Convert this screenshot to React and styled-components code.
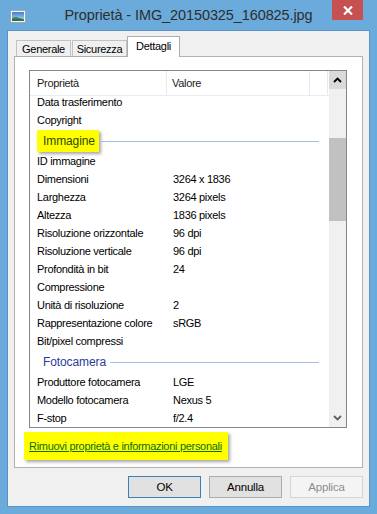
import React from "react";
import styled, { createGlobalStyle } from "styled-components";

const GlobalStyle = createGlobalStyle`
    html, body {
        margin: 0;
        padding: 0;
        background: #6aabdc;
    }
    body {
        font-family: "Liberation Sans", Arial, sans-serif;
        font-size: 11px;
        letter-spacing: -0.3px;
        color: #000;
    }
`

const tabs = [
    { title: "Generale", width: 55, active: false },
    { title: "Sicurezza", width: 55, active: false },
    { title: "Dettagli", width: 53, active: true },
]

const rows = [
    { name: "Data trasferimento" },
    { name: "Copyright" },
    { group: "Immagine", highlight: true },
    { name: "ID immagine" },
    { name: "Dimensioni", value: "3264 x 1836" },
    { name: "Larghezza", value: "3264 pixels" },
    { name: "Altezza", value: "1836 pixels" },
    { name: "Risoluzione orizzontale", value: "96 dpi" },
    { name: "Risoluzione verticale", value: "96 dpi" },
    { name: "Profondità in bit", value: "24" },
    { name: "Compressione" },
    { name: "Unità di risoluzione", value: "2" },
    { name: "Rappresentazione colore", value: "sRGB" },
    { name: "Bit/pixel compressi" },
    { group: "Fotocamera" },
    { name: "Produttore fotocamera", value: "LGE" },
    { name: "Modello fotocamera", value: "Nexus 5" },
    { name: "F-stop", value: "f/2.4" },
    { name: "Tempo di esposizione", value: "1/30 sec." },
]

const ImageIcon = () => (
    <svg width="16" height="13" viewBox="0 0 16 13">
        <defs>
            <linearGradient id="sky" x1="0" y1="0" x2="0" y2="1">
                <stop offset="0" stopColor="#3d7fd0" />
                <stop offset="1" stopColor="#bfe3f5" />
            </linearGradient>
        </defs>
        <rect x="0.5" y="0.5" width="15" height="12" fill="#f4f6f8" stroke="#9aa7b4" />
        <rect x="2" y="2" width="12" height="9" fill="url(#sky)" />
        <path d="M2 11 L2 8 Q6 6 9 8 L14 9 L14 11 Z" fill="#3f8a5a" />
        <path d="M2 9.5 Q7 8 14 10 L14 11 L2 11 Z" fill="#2e6e4a" />
    </svg>
)

const Chevron = ({ up, color }) => (
    <svg width="9" height="6" viewBox="0 0 9 6">
        <path
            d={up ? "M1 5 L4.5 1.5 L8 5" : "M1 1 L4.5 4.5 L8 1"}
            fill="none"
            stroke={color}
            strokeWidth="1.8"
        />
    </svg>
)

const App = () => {
    return (
        <>
            <GlobalStyle />
            <Window>
                <TitleBar>
                    <div className="icon"><ImageIcon /></div>
                    <Title>Proprietà - IMG_20150325_160825.jpg</Title>
                    <CloseButton>
                        <svg width="10" height="9" viewBox="0 0 10 9">
                            <path d="M1 0.5 L9 8.5 M9 0.5 L1 8.5" stroke="#fff" strokeWidth="2.2" />
                        </svg>
                    </CloseButton>
                </TitleBar>

                <Client>
                    <TabStrip>
                        {tabs.map((tab, index) => (
                            <Tab key={index} $active={tab.active} $width={tab.width}>
                                {tab.title}
                            </Tab>
                        ))}
                    </TabStrip>

                    <Panel>
                        <ListView>
                            <ListMain>
                                <Header>
                                    <HeaderCell $width={137}>Proprietà</HeaderCell>
                                    <HeaderCell $width={143}>Valore</HeaderCell>
                                    <HeaderCell $width={18} />
                                </Header>
                                <ListBody>
                                    <Rows>
                                        {rows.map((row, index) => {
                                            if (row.group) {
                                                return (
                                                    <GroupRow key={index}>
                                                        {row.highlight ? (
                                                            <Highlight>{row.group}</Highlight>
                                                        ) : (
                                                            <GroupTitle>{row.group}</GroupTitle>
                                                        )}
                                                        <GroupLine />
                                                    </GroupRow>
                                                )
                                            }
                                            return (
                                                <Row key={index}>
                                                    <Name>{row.name}</Name>
                                                    <Value>{row.value}</Value>
                                                </Row>
                                            )
                                        })}
                                    </Rows>
                                </ListBody>
                            </ListMain>

                            <ScrollBar>
                                <ScrollButton $pressed>
                                    <Chevron up color="#000" />
                                </ScrollButton>
                                <Track>
                                    <TrackSpace $height={49} />
                                    <Thumb />
                                    <TrackSpace $grow />
                                </Track>
                                <ScrollButton>
                                    <Chevron color="#606060" />
                                </ScrollButton>
                            </ScrollBar>
                        </ListView>

                        <LinkBox>
                            <Link href="#">Rimuovi proprietà e informazioni personali</Link>
                        </LinkBox>
                    </Panel>

                    <ButtonRow>
                        <Button $default>OK</Button>
                        <Button>Annulla</Button>
                        <Button $disabled>Applica</Button>
                    </ButtonRow>
                </Client>
            </Window>
        </>
    )
}

const Window = styled.div`
    width: 377px;
    height: 514px;
    box-sizing: border-box;
    background: #6aabdc;
    padding: 0 7px 7px 7px;
    display: flex;
    flex-direction: column;
`

const TitleBar = styled.div`
    height: 30px;
    margin: 0 -7px;
    display: grid;
    grid-template-columns: 38px 1fr 38px;
    align-items: start;

    div.icon {
        padding: 10px 0 0 10px;
        line-height: 0;
    }
`

const Title = styled.div`
    text-align: center;
    font-size: 14.5px;
    letter-spacing: -0.1px;
    color: #2e2e2e;
    padding-top: 7px;
    white-space: nowrap;
`

const CloseButton = styled.div`
    width: 31px;
    height: 20px;
    background: #c75050;
    display: flex;
    align-items: center;
    justify-content: center;
    margin-left: -7px;
`

const Client = styled.div`
    flex: 1;
    background: #f0f0f0;
    border: 1px solid #5b93c8;
    display: flex;
    flex-direction: column;
    padding: 0 6px 0 6px;
`

const TabStrip = styled.div`
    display: flex;
    align-items: flex-end;
    padding: 6px 0 0 2px;
    height: 26px;
    box-sizing: border-box;
    position: relative;
    z-index: 1;
    margin-bottom: -1px;
`

const Tab = styled.div`
    width: ${(p) => p.$width}px;
    box-sizing: border-box;
    height: ${(p) => (p.$active ? 21 : 17)}px;
    border: 1px solid ${(p) => (p.$active ? "#adadad" : "#c2c2c2")};
    border-bottom: ${(p) => (p.$active ? "none" : "1px solid #adadad")};
    background: ${(p) => (p.$active ? "#fff" : "#f0f0f0")};
    margin-left: ${(p) => (p.$active ? "-1px" : "0")};
    margin-right: ${(p) => (p.$active ? "0" : "1px")};
    text-align: center;
    padding-top: ${(p) => (p.$active ? 3 : 2)}px;
    font-size: 11px;
    color: #000;
`

const Panel = styled.div`
    height: 412px;
    box-sizing: border-box;
    background: #fff;
    border: 1px solid #b2b2b2;
    padding: 13px 0 0 14px;
    display: flex;
    flex-direction: column;
    align-items: flex-start;
`

const ListView = styled.div`
    width: 318px;
    height: 358px;
    flex-shrink: 0;
    box-sizing: border-box;
    border: 1px solid #828790;
    display: flex;
    overflow: hidden;
`

const ListMain = styled.div`
    flex: 1;
    display: flex;
    flex-direction: column;
    min-width: 0;
`

const Header = styled.div`
    height: 24px;
    flex-shrink: 0;
    display: flex;
    border-bottom: 1px solid #e3ecf7;
    background: #fff;
    position: relative;
    z-index: 1;
`

const HeaderCell = styled.div`
    width: ${(p) => p.$width}px;
    flex-shrink: 0;
    box-sizing: border-box;
    border-right: 1px solid #e6eaf0;
    padding: 6px 0 0 7px;
    color: #1b1b1b;

    &:nth-child(2) {
        padding-left: 5px;
    }
`

const ListBody = styled.div`
    flex: 1;
    overflow: hidden;
`

const Rows = styled.div`
    margin-top: -3px;
`

const Row = styled.div`
    height: 18px;
    display: flex;
    align-items: center;
`

const Name = styled.div`
    width: 136px;
    padding-left: 7px;
    flex-shrink: 0;
    white-space: nowrap;
`

const Value = styled.div`
    flex: 1;
    white-space: nowrap;
`

const GroupRow = styled.div`
    height: 23px;
    box-sizing: border-box;
    padding: 1px 10px 0 13px;
    display: flex;
    align-items: center;
`

const GroupTitle = styled.span`
    font-size: 12px;
    letter-spacing: -0.1px;
    color: #2b3b9c;
    margin-right: 4px;
`

const Highlight = styled.span`
    display: inline-block;
    background: #ffff00;
    box-shadow: 2px 2px 3px rgba(0, 0, 0, 0.35);
    font-size: 12px;
    letter-spacing: -0.1px;
    color: #2c4a00;
    height: 22px;
    line-height: 22px;
    padding: 0 4px 0 6px;
    margin-left: -6px;
`

const GroupLine = styled.div`
    flex: 1;
    height: 1px;
    background: #a9bde2;
`

const ScrollBar = styled.div`
    width: 17px;
    flex-shrink: 0;
    display: flex;
    flex-direction: column;
    background: #f0f0f0;
`

const ScrollButton = styled.div`
    height: 18px;
    flex-shrink: 0;
    background: ${(p) => (p.$pressed ? "#dadada" : "#f0f0f0")};
    display: flex;
    align-items: center;
    justify-content: center;
`

const Track = styled.div`
    flex: 1;
    display: flex;
    flex-direction: column;
`

const TrackSpace = styled.div`
    height: ${(p) => (p.$height ? `${p.$height}px` : "auto")};
    flex: ${(p) => (p.$grow ? 1 : "none")};
`

const Thumb = styled.div`
    height: 83px;
    background: #c1c1c1;
`

const LinkBox = styled.div`
    height: 28px;
    box-sizing: border-box;
    margin: 4px 0 0 -5px;
    background: #ffff00;
    box-shadow: 2px 2px 3px rgba(0, 0, 0, 0.35);
    padding: 0 6px 0 5px;
    display: flex;
    align-items: center;
`

const Link = styled.a`
    color: #0b6e0b;
    text-decoration: underline;
    white-space: nowrap;
    line-height: 14px;
`

const ButtonRow = styled.div`
    display: flex;
    justify-content: flex-end;
    gap: 8px;
    padding-top: 8px;
`

const Button = styled.div`
    width: 73px;
    height: 22px;
    box-sizing: border-box;
    display: flex;
    align-items: center;
    justify-content: center;
    background: ${(p) => (p.$disabled ? "#f4f4f4" : "#e1e1e1")};
    border: 1px solid ${(p) => (p.$default ? "#3c7fb1" : p.$disabled ? "#d5d5d5" : "#adadad")};
    color: ${(p) => (p.$disabled ? "#8d8d8d" : "#000")};
    font-size: 11.5px;
    letter-spacing: -0.2px;
`

export default App
